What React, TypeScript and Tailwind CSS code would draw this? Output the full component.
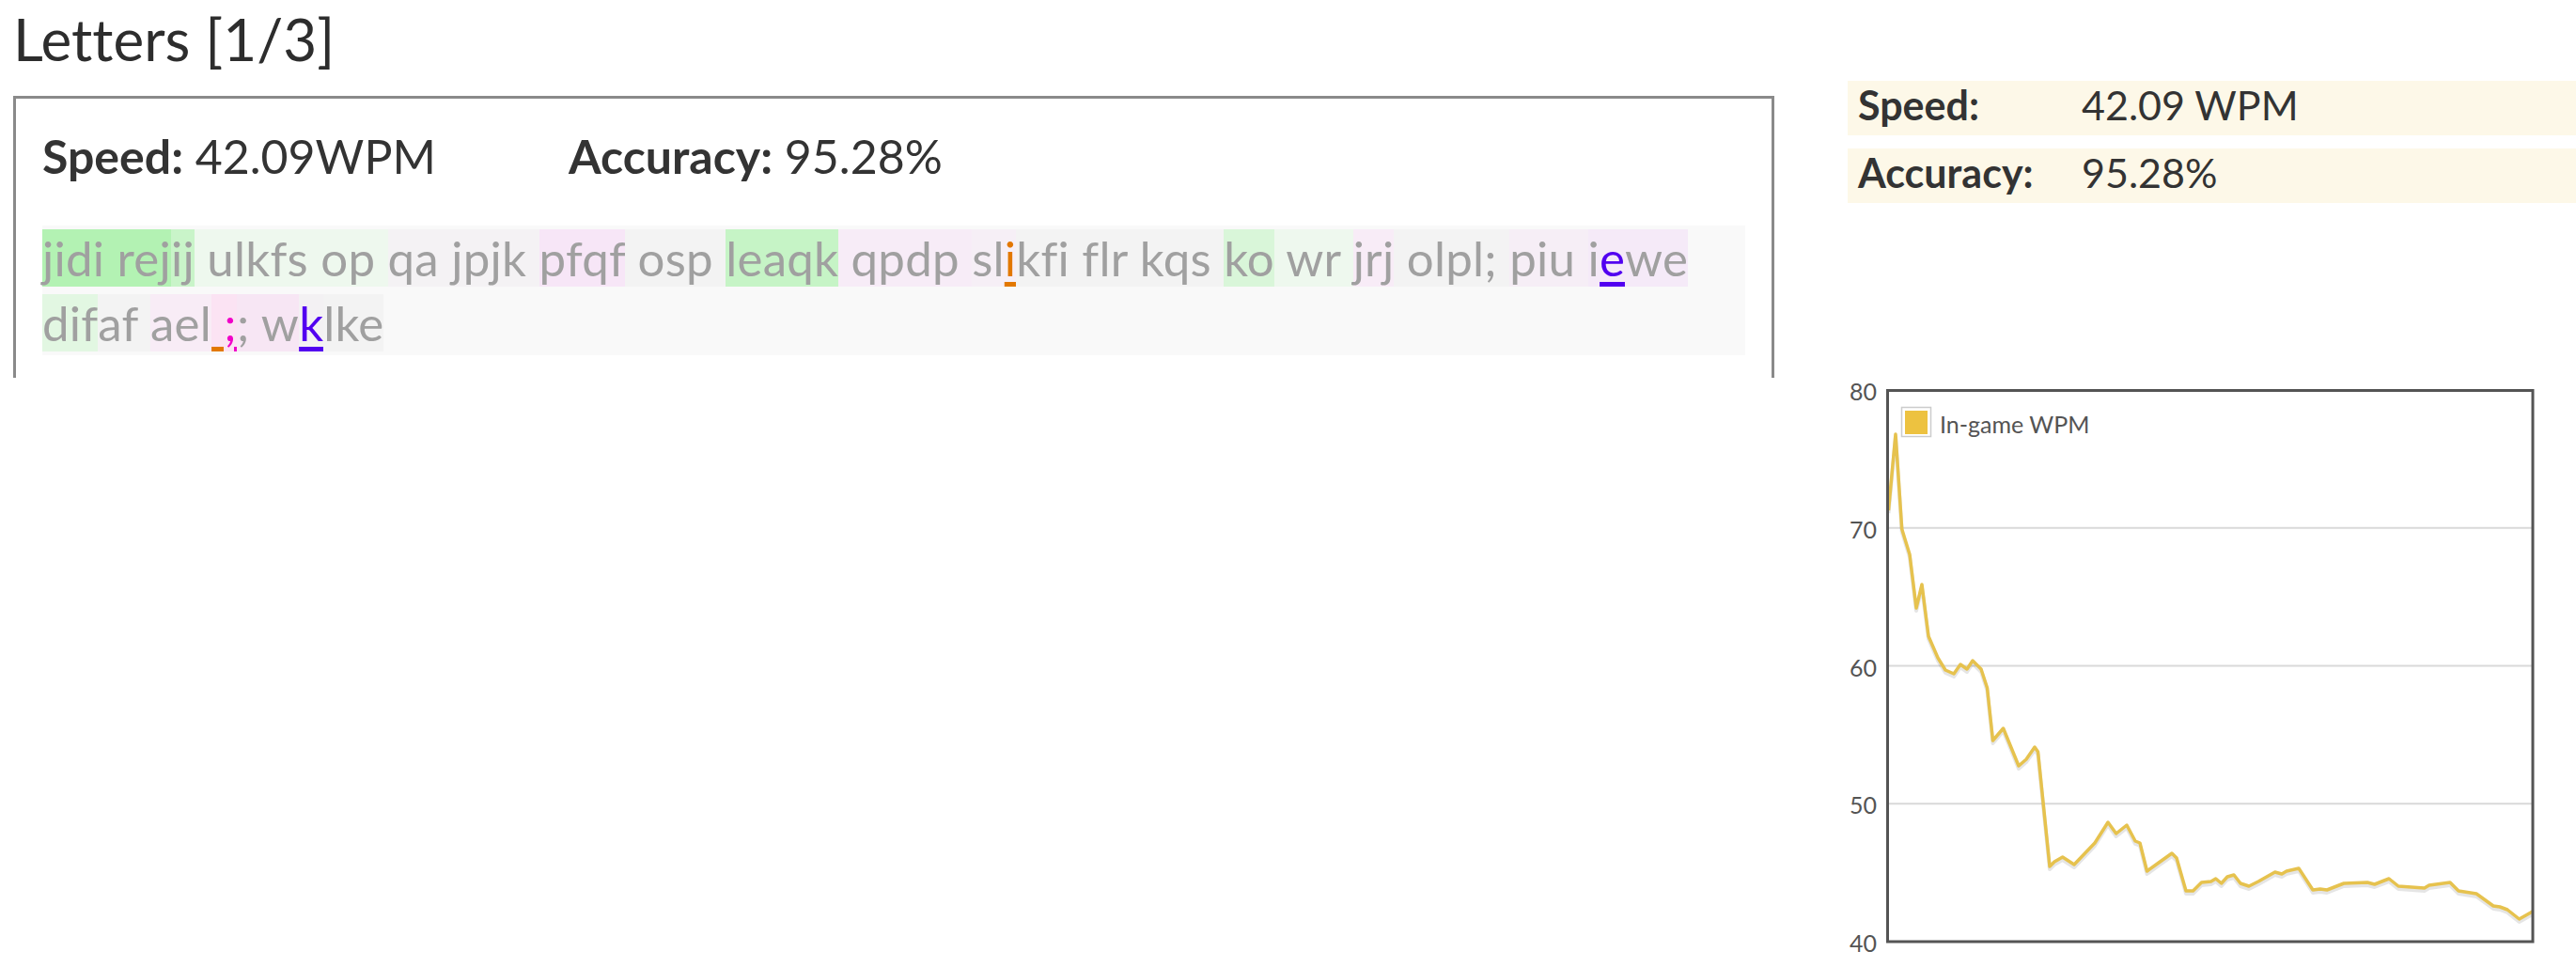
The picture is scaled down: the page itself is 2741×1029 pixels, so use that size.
import React from 'react';

type Seg = { t: string; bg: string; mark?: 'orange' | 'pink' | 'blue' };

const markStyles: { [key: string]: string } = {
  orange: 'text-[#e27800] underline decoration-[#e27800] decoration-[5px] underline-offset-[6px]',
  pink: 'text-[#f000c8] underline decoration-[#f000c8] decoration-[5px] underline-offset-[6px]',
  blue: 'text-[#5200f0] underline decoration-[#5200f0] decoration-[5px] underline-offset-[6px]',
};

const line1: Seg[] = [
  { t: 'jidi rej', bg: 'bg-[#b3f2b3]' },
  { t: 'ij', bg: 'bg-[#c9f4c9]' },
  { t: ' ulkfs op ', bg: 'bg-[#eef8ee]' },
  { t: 'qa jpjk ', bg: 'bg-[#f4f2f4]' },
  { t: 'pfqf', bg: 'bg-[#f7e6f7]' },
  { t: ' osp ', bg: 'bg-[#f3f3f3]' },
  { t: 'leaqk', bg: 'bg-[#c6f4c6]' },
  { t: ' qpdp ', bg: 'bg-[#f7ecf7]' },
  { t: 'sl', bg: 'bg-[#f6eff6]' },
  { t: 'i', bg: 'bg-[#f6eff6]', mark: 'orange' },
  { t: 'kfi flr kqs ', bg: 'bg-[#f3f3f3]' },
  { t: 'ko', bg: 'bg-[#d9f6d9]' },
  { t: ' wr ', bg: 'bg-[#eef8ee]' },
  { t: 'jrj', bg: 'bg-[#f8ecf7]' },
  { t: ' olpl; ', bg: 'bg-[#f3f3f3]' },
  { t: 'piu ', bg: 'bg-[#f6eef6]' },
  { t: 'i', bg: 'bg-[#f5eaf8]' },
  { t: 'e', bg: 'bg-[#f5eaf8]', mark: 'blue' },
  { t: 'we', bg: 'bg-[#f5eaf8]' },
];

const line2: Seg[] = [
  { t: 'dif', bg: 'bg-[#e2f7e2]' },
  { t: 'af ', bg: 'bg-[#f3f3f3]' },
  { t: 'ael', bg: 'bg-[#f8ecf6]' },
  { t: ' ', bg: 'bg-[#fbe3f3]', mark: 'orange' },
  { t: ';', bg: 'bg-[#fbe3f3]', mark: 'pink' },
  { t: '; w', bg: 'bg-[#f7e6f4]' },
  { t: 'k', bg: 'bg-[#f3f1f3]', mark: 'blue' },
  { t: 'lke', bg: 'bg-[#f3f3f3]' },
];

// in-game wpm trace, page pixel coords
const points: [number, number][] = [
  [2010.5, 543], [2018, 462], [2024.7, 563], [2033, 590], [2040, 647], [2046, 622],
  [2053, 677], [2063, 700], [2071, 713], [2080, 717], [2087, 707], [2094, 712],
  [2100, 703], [2109, 712], [2115.5, 732], [2121.5, 788], [2132.6, 775], [2149, 815],
  [2157, 808], [2166, 795], [2169.5, 800], [2182, 922], [2187, 917], [2195.7, 912],
  [2208, 920], [2230, 897], [2244, 875], [2252.7, 887], [2264, 878], [2273, 895],
  [2278, 897], [2285.5, 927], [2298, 918], [2312, 908], [2317, 913], [2327, 948],
  [2334.5, 948], [2343.5, 939], [2353.6, 938], [2358.7, 935], [2364.7, 940], [2371, 933],
  [2378, 931], [2385, 940], [2394, 943], [2404, 938], [2421.7, 928], [2429, 930],
  [2434, 927], [2447, 924], [2462, 947], [2469.7, 946], [2477, 947], [2495, 940],
  [2520, 939], [2527.7, 941], [2543, 935], [2553, 943], [2580.7, 945], [2585.7, 942],
  [2608, 939], [2617, 948], [2636, 951], [2654, 964], [2661, 965], [2669, 968],
  [2681.6, 978], [2695.7, 970],
];

const ticks = [
  { v: '80', y: 415 },
  { v: '70', y: 561.75 },
  { v: '60', y: 708.5 },
  { v: '50', y: 855.25 },
  { v: '40', y: 1002 },
];

const Line = ({ segs }: { segs: Seg[] }) => (
  <>
    {segs.map((s, i) => (
      <span key={i} className={`${s.bg} ${s.mark ? markStyles[s.mark] : ''}`}>
        {s.t}
      </span>
    ))}
  </>
);

const WpmChart = () => {
  const pts = points.map(p => p.join(',')).join(' ');
  return (
    <svg width={776} height={629} viewBox="1966 400 776 629" className="block">
      {ticks.slice(1, 4).map(t => (
        <line key={t.v} x1={2010} x2={2696} y1={t.y} y2={t.y} stroke="#d9d9d9" strokeWidth={2} />
      ))}
      <polyline points={pts} fill="none" stroke="rgba(0,0,0,0.1)" strokeWidth={4} transform="translate(0,3)" strokeLinejoin="round" />
      <polyline points={pts} fill="none" stroke="#e6c24e" strokeWidth={3.5} strokeLinejoin="round" />
      <rect x={2009.5} y={415.5} width={686.5} height={586.5} fill="none" stroke="#545454" strokeWidth={3} />
      {ticks.map(t => (
        <text key={t.v} x={1998} y={t.y + 11} textAnchor="end" fontSize={25} fill="#545454" fontFamily="Lato, sans-serif">
          {t.v}
        </text>
      ))}
      <rect x={2024.5} y={433.5} width={31} height={31} fill="#fff" stroke="#cccccc" strokeWidth={1.5} />
      <rect x={2028} y={437} width={24} height={25} fill="#edc240" />
      <text x={2065} y={461} fontSize={25} fill="#545454" fontFamily="Lato, sans-serif">
        In-game WPM
      </text>
    </svg>
  );
};

export default function App() {
  return (
    <div className="w-[2741px] h-[1029px] bg-white overflow-hidden flex font-['Lato',sans-serif] [font-variant-ligatures:none]">
      <div className="ml-[14px] w-[1874px] shrink-0">
        <h1 className="pt-[5px] text-[62px] leading-[72px] font-normal text-[#2d2d2d]">Letters [1/3]</h1>
        <div className="mt-[25px] h-[300px] border-[3px] border-b-0 border-[#8a8a8a] px-[28px] pt-[30px]">
          <div className="flex text-[50px] leading-[62px] text-[#333]">
            <div className="w-[560px]">
              <span className="font-bold">Speed:</span> 42.09WPM
            </div>
            <div>
              <span className="font-bold">Accuracy:</span> 95.28%
            </div>
          </div>
          <div className="mt-[43px] bg-[#f9f9f9] text-[51px] leading-[69px] tracking-[0.25px] text-[#a0a0a0]">
            <Line segs={line1} />
            <br />
            <Line segs={line2} />
          </div>
        </div>
      </div>

      <div className="ml-[78px] w-[775px] shrink-0 pt-[86px] text-[43px] text-[#333]">
        <div className="h-[58px] bg-[#fdf8e8] flex leading-[52px]">
          <div className="w-[249px] pl-[11px] font-bold">Speed:</div>
          <div>42.09 WPM</div>
        </div>
        <div className="mt-[14px] h-[58px] bg-[#fdf8e8] flex leading-[52px]">
          <div className="w-[249px] pl-[11px] font-bold">Accuracy:</div>
          <div>95.28%</div>
        </div>
        <div className="mt-[184px] -ml-[1px]">
          <WpmChart />
        </div>
      </div>
    </div>
  );
}
